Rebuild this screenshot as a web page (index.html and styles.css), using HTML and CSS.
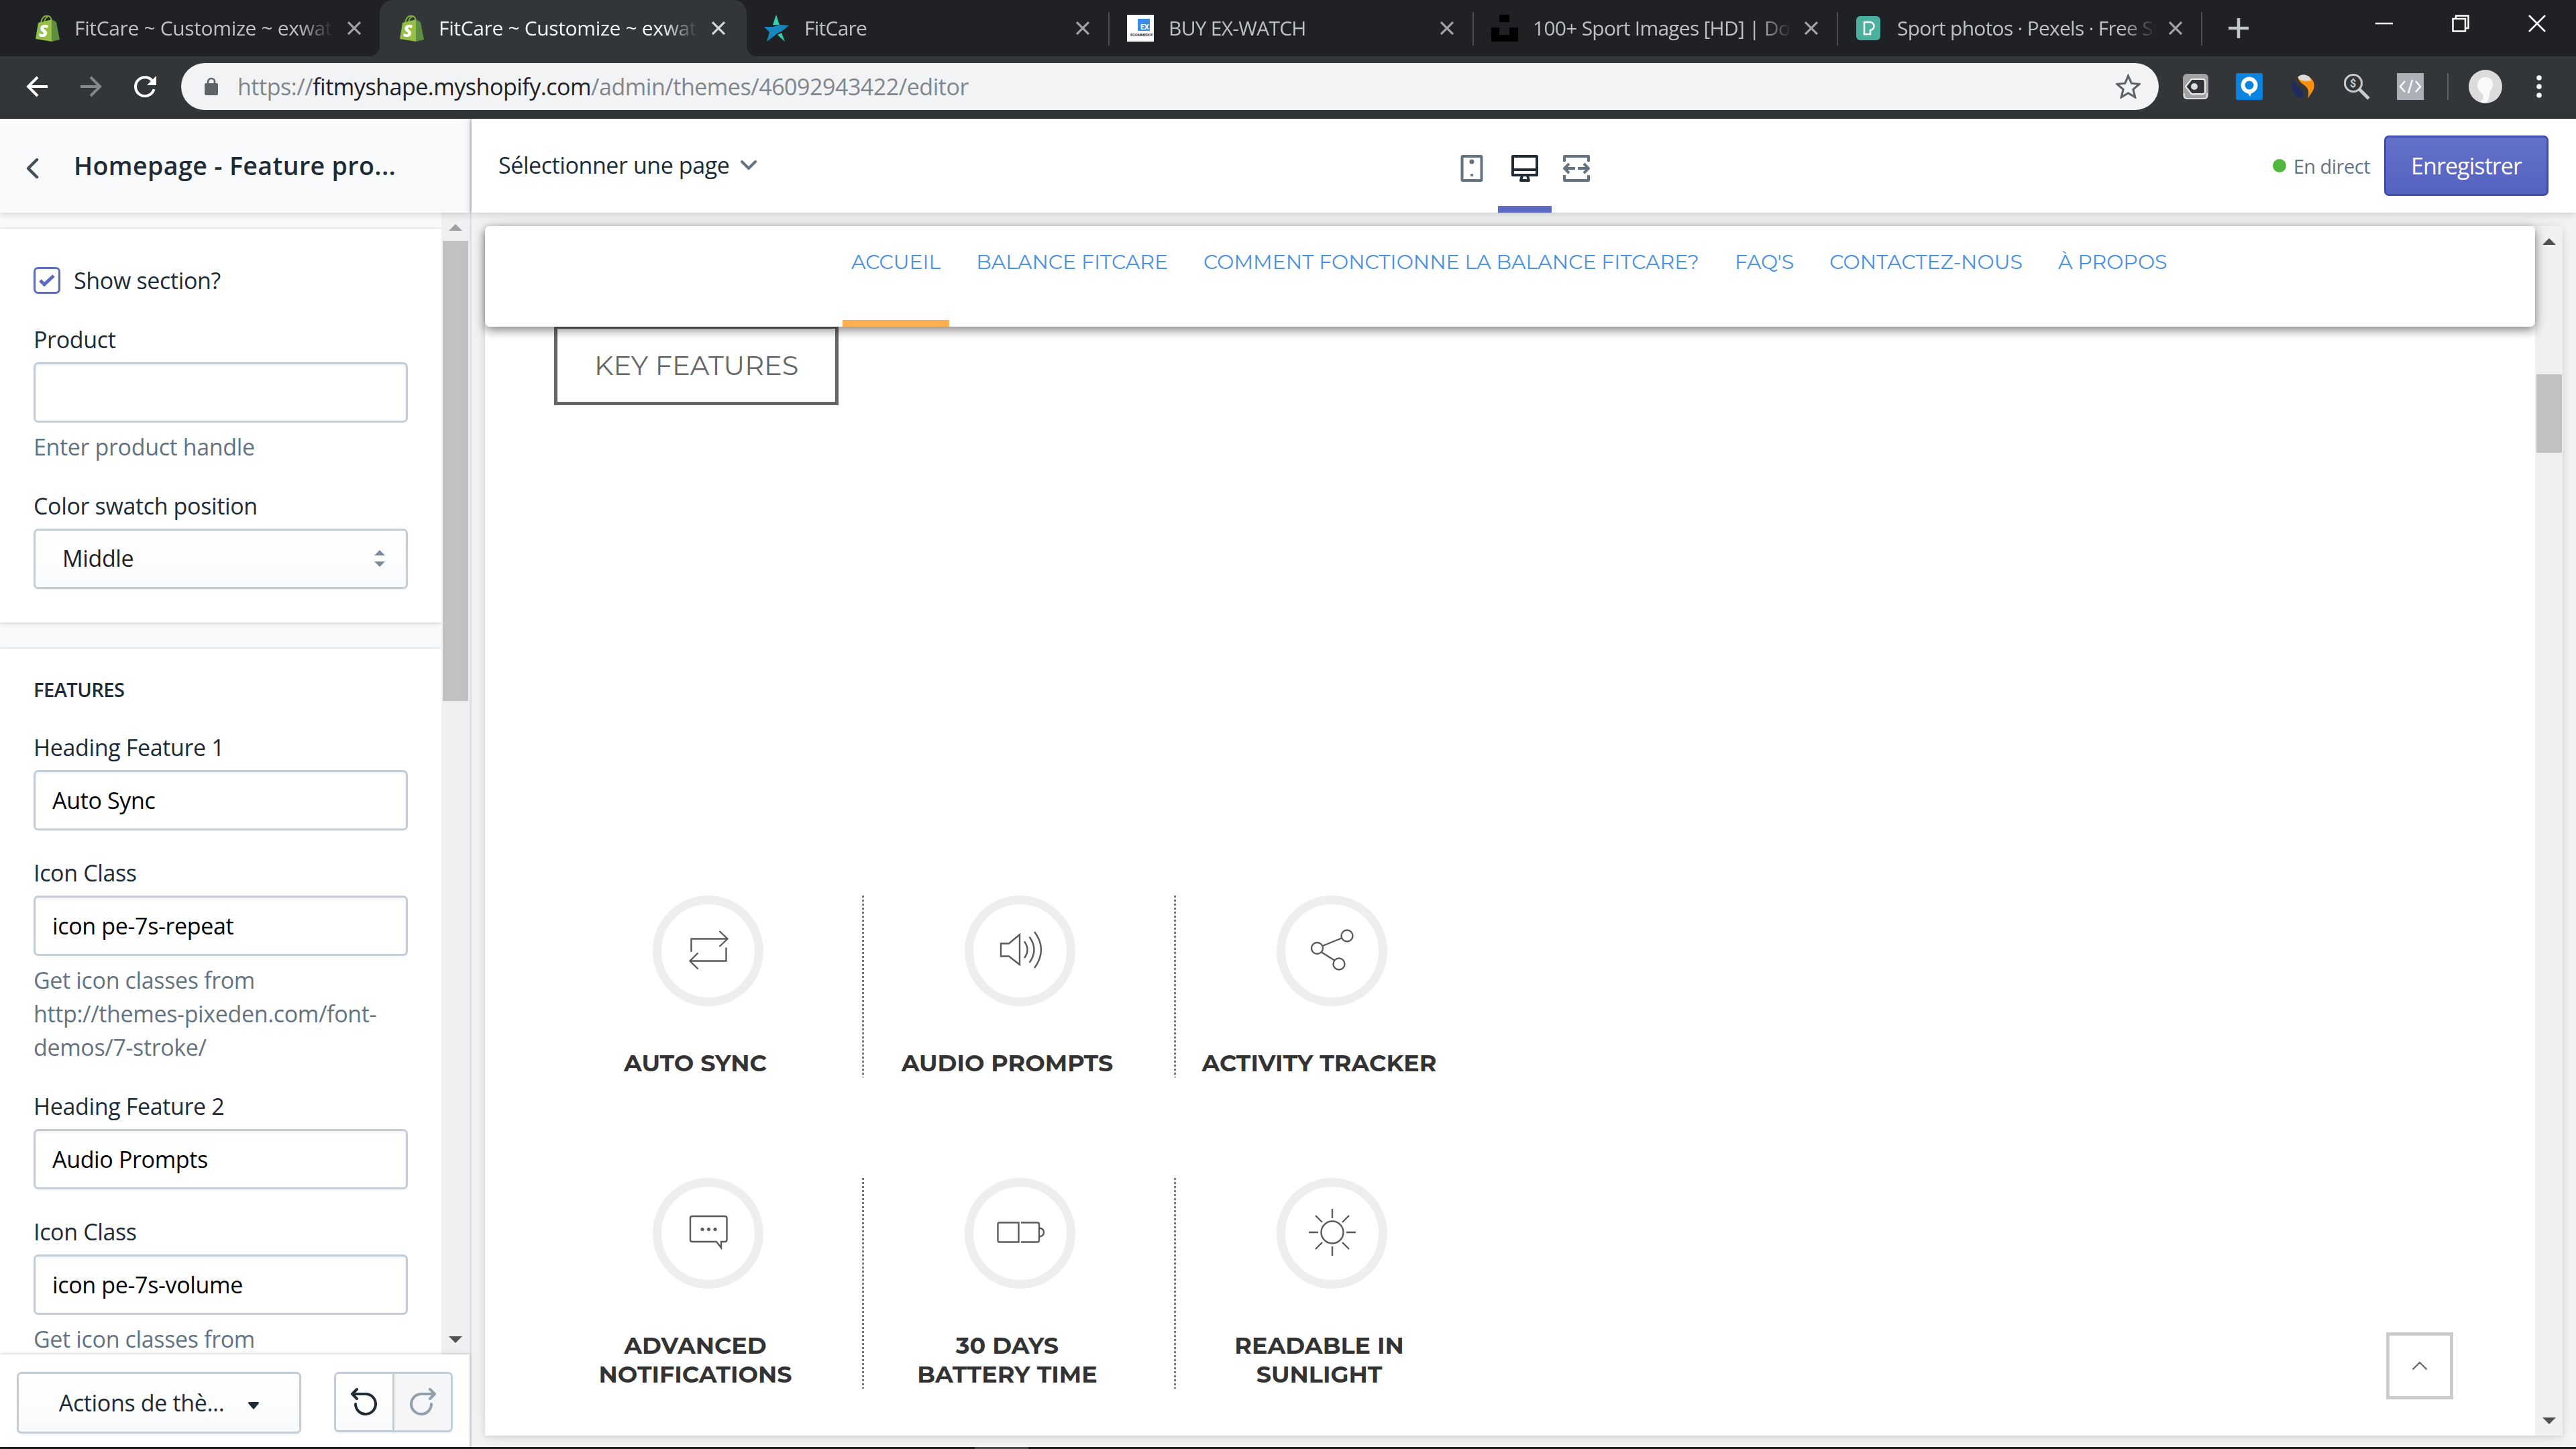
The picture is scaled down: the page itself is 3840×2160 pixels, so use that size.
FILE: index.html
```
<!DOCTYPE html>
<html lang="fr">
<head>
	<meta charset="UTF-8" />
	<meta name="viewport" content="width=device-width, initial-scale=1.0" />
	<title>FitCare ~ Customize ~ exwatch</title>
	<link rel="stylesheet" href="styles.css">
</head>
<body>
	<!-- shared symbols -->
	<svg class="defs" width="0" height="0">
		<symbol id="shopify" viewBox="0 0 38 40">
			<path d="M9 12C10 5 14 1 18 2c4-1 7 3 7 8" fill="none" stroke="#7fb03c" stroke-width="2" />
			<path d="M14 11C15 6 17 3 20 3" fill="none" stroke="#7fb03c" stroke-width="2" />
			<path d="M5 12l20-5 1 33L1 36z" fill="#95bf47" />
			<path d="M25 7l7 4 5 26-12 3z" fill="#5e8e3e" />
			<text x="6" y="33" class="bag-letter">S</text>
		</symbol>
		<symbol id="cross" viewBox="0 0 20 20">
			<path d="M1 1l18 18M19 1L1 19" fill="none" stroke="currentColor" stroke-width="3.2" />
		</symbol>
	</svg>

	<header class="tabs">
		<div class="tab">
			<svg class="favicon"><use href="#shopify" /></svg>
			<span class="tab-title">FitCare ~ Customize ~ exwatc</span>
			<svg class="tab-close"><use href="#cross" /></svg>
		</div>
		<div class="tab active">
			<svg class="favicon"><use href="#shopify" /></svg>
			<span class="tab-title">FitCare ~ Customize ~ exwatc</span>
			<svg class="tab-close"><use href="#cross" /></svg>
		</div>
		<div class="tab line">
			<svg class="favicon" viewBox="0 0 40 40">
				<path d="M15 15L20 0l5 15z" fill="#35d0ae" />
				<path d="M2 18h13l10-3 14 1-11 9-5 2-17 13 4-14z" fill="#1787c0" />
				<path d="M22 30l6-3 5 13z" fill="#35d0ae" />
			</svg>
			<span class="tab-title tight">FitCare</span>
			<svg class="tab-close"><use href="#cross" /></svg>
		</div>
		<div class="tab line">
			<svg class="favicon" viewBox="0 0 40 40">
				<rect width="40" height="40" fill="#fff" />
				<rect x="16" y="6" width="18" height="18" fill="#3b8ae6" />
				<text x="20" y="22" class="ex-letters">EX</text>
				<text x="5" y="32" class="ex-small">ECOMMERCE</text>
			</svg>
			<span class="tab-title tight">BUY EX-WATCH</span>
			<svg class="tab-close"><use href="#cross" /></svg>
		</div>
		<div class="tab line">
			<svg class="favicon" viewBox="0 0 40 40">
				<path d="M12 0h15v11H12zM0 19h12v11h15V19h13v21H0z" fill="#000" />
			</svg>
			<span class="tab-title tight">100+ Sport Images [HD] | Do</span>
			<svg class="tab-close"><use href="#cross" /></svg>
		</div>
		<div class="tab line">
			<svg class="favicon" viewBox="0 0 40 40">
				<rect x="1" y="2" width="36" height="36" rx="6" fill="#4bb09e" />
				<path d="M13 11h8a6 6 0 0 1 1 12v6h-9z" fill="none" stroke="#fff" stroke-width="2.5" />
			</svg>
			<span class="tab-title tight">Sport photos · Pexels · Free St</span>
			<svg class="tab-close"><use href="#cross" /></svg>
		</div>
		<svg class="new-tab" viewBox="0 0 30 30"><path d="M15 0v30M0 15h30" stroke="#c4c7ca" stroke-width="4.5" /></svg>
		<div class="window-buttons">
			<svg width="26" height="26" viewBox="0 0 26 26"><path d="M0 13h26" stroke="#fff" stroke-width="2.5" /></svg>
			<svg width="26" height="26" viewBox="0 0 26 26"><path d="M6 6V1.5h18.5V20H20M1.5 6H20v18.500H1.500z" fill="none" stroke="#fff" stroke-width="2.5" /></svg>
			<svg width="26" height="26" viewBox="0 0 26 26"><path d="M1 1l24 24M25 1L1 25" stroke="#fff" stroke-width="2.5" /></svg>
		</div>
	</header>

	<div class="toolbar">
		<svg class="nav-icon" viewBox="0 0 32 32"><path d="M32 16H3M17 2L3 16l14 14" fill="none" stroke="#fff" stroke-width="4" /></svg>
		<svg class="nav-icon" viewBox="0 0 32 32"><path d="M0 16h29M15 2l14 14-14 14" fill="none" stroke="#85888b" stroke-width="4" /></svg>
		<svg class="nav-icon" viewBox="0 0 32 32">
			<path d="M28 9A14 14 0 1 0 29.500 20" fill="none" stroke="#fff" stroke-width="4" />
			<path d="M33 0v14H19z" fill="#fff" />
		</svg>
		<div class="omnibox">
			<svg class="lock" viewBox="0 0 20 28">
				<path d="M5 11V7a5 5 0 0 1 10 0v4" fill="none" stroke="#5f6368" stroke-width="2.600" />
				<rect y="9" width="20" height="18" rx="2" fill="#5f6368" />
			</svg>
			<span class="url">https://<b>fitmyshape.myshopify.com</b>/admin/themes/46092943422/editor</span>
			<svg class="star" viewBox="0 0 36 36"><path d="M18 3l4.600 10.800L34 15l-8.800 7.600L28 34l-10-6-10 6 2.800-11.400L2 15l11.400-1.200z" fill="none" stroke="#5f6368" stroke-width="3" /></svg>
		</div>
		<div class="extensions">
			<svg viewBox="0 0 40 40">
				<rect x="1" y="1" width="38" height="38" rx="6" fill="#a2a2a2" />
				<path d="M3 30v3q0 5 5 5h24q5 0 5-5v-3" fill="none" stroke="#ddd" stroke-width="2" />
				<path d="M5 20l9-11h16q4 0 4 4v14q0 4-4 4H14z" fill="#303437" stroke="#eee" stroke-width="2" />
				<circle cx="18" cy="20" r="5" fill="#ddd" />
			</svg>
			<svg viewBox="0 0 40 40">
				<rect width="40" height="40" rx="3" fill="#0a84e0" />
				<circle cx="20" cy="18" r="9.500" fill="none" stroke="#fff" stroke-width="6" />
				<path d="M15 25h10l-4 10z" fill="#fff" />
			</svg>
			<svg viewBox="0 0 40 40">
				<path d="M5 6q-6 20 8 30l6 1q4-6-3-14Q6 15 5 6z" fill="#1d2b5e" />
				<path d="M12 6q8-6 18 0 10 8 5 20l-8 12q4-14-5-20-8-5-10-12z" fill="#ff8f0c" />
				<path d="M13 5q8-6 17 1l2 5q-12 2-18-2z" fill="#dcdcdc" />
			</svg>
			<svg viewBox="0 0 40 40">
				<circle cx="15" cy="15" r="12.500" fill="none" stroke="#c9cbcd" stroke-width="3" />
				<path d="M24 24l14 14" stroke="#c9cbcd" stroke-width="5" />
				<text x="10" y="21" class="dollar">$</text>
			</svg>
			<svg viewBox="0 0 40 40">
				<rect width="40" height="40" fill="#adb0b7" />
				<path d="M12 12l-7 8 7 8M28 12l7 8-7 8M23 10l-6 20" fill="none" stroke="#fff" stroke-width="2.500" />
			</svg>
		</div>
		<div class="toolbar-line"></div>
		<svg class="avatar" viewBox="0 0 50 50">
			<circle cx="25" cy="25" r="25" fill="#dcdcdc" />
			<path d="M25 11c8 0 12 6 11 13-1 6-5 7-5 12 0 6-2 11-5 13-3 1-7 0-8-2 4-2 4-7 3-11-5-3-8-8-8-13 0-7 5-12 12-12z" fill="#f8f9f9" />
		</svg>
		<svg class="dots" viewBox="0 0 8 34"><circle cx="4" cy="4" r="3.800" /><circle cx="4" cy="17" r="3.800" /><circle cx="4" cy="30" r="3.800" /></svg>
	</div>

	<div class="editor">
		<aside class="sidebar">
			<div class="sidebar-header">
				<svg width="20" height="30" viewBox="0 0 20 30"><path d="M17 2L4 15l13 13" fill="none" stroke="#454f5b" stroke-width="4.500" stroke-linecap="round" stroke-linejoin="round" /></svg>
				<h1>Homepage - Feature pro...</h1>
			</div>
			<div class="sidebar-body">
				<div class="settings">
					<section class="card">
						<label class="check">
							<span class="checkbox">
								<svg width="26" height="22" viewBox="0 0 26 22"><path d="M3 11l6 6L23 4" fill="none" stroke="#5c6ac4" stroke-width="5" /></svg>
							</span>
							Show section?
						</label>
						<div class="field">
							<label>Product</label>
							<div class="input"></div>
							<p class="help">Enter product handle</p>
						</div>
						<div class="field">
							<label>Color swatch position</label>
							<div class="input select">
								Middle
								<svg width="16" height="25" viewBox="0 0 16 25"><path d="M8 0l8 8H0zM8 25l8-8H0z" fill="#798c9c" /></svg>
							</div>
						</div>
					</section>
					<section class="card">
						<h2>Features</h2>
						<div class="field">
							<label>Heading Feature 1</label>
							<div class="input">Auto Sync</div>
						</div>
						<div class="field">
							<label>Icon Class</label>
							<div class="input">icon pe-7s-repeat</div>
							<p class="help">Get icon classes from<br>http://themes-pixeden.com/font-<br>demos/7-stroke/</p>
						</div>
						<div class="field">
							<label>Heading Feature 2</label>
							<div class="input">Audio Prompts</div>
						</div>
						<div class="field">
							<label>Icon Class</label>
							<div class="input">icon pe-7s-volume</div>
							<p class="help">Get icon classes from</p>
						</div>
					</section>
				</div>
				<div class="scrollbar side-scroll">
					<div class="arrow up"></div>
					<div class="thumb"></div>
					<div class="arrow down"></div>
				</div>
			</div>
			<div class="sidebar-footer">
				<div class="btn actions">
					Actions de thè...
					<svg width="16" height="11" viewBox="0 0 16 11"><path d="M1 0h14q2 1 0 3L9 10q-1 1-2 0L1 3q-2-2 0-3z" fill="#212b36" /></svg>
				</div>
				<div class="history">
					<div class="btn">
						<svg width="42" height="42" viewBox="0 0 42 42"><path d="M10 2L3 9l7 7M3 9h21a15 15 0 1 1-16 15" fill="none" stroke="#212b36" stroke-width="4" stroke-linecap="round" stroke-linejoin="round" /></svg>
					</div>
					<div class="btn disabled">
						<svg width="42" height="42" viewBox="0 0 42 42"><path d="M32 2l7 7-7 7M39 9H18a15 15 0 1 0 16 15" fill="none" stroke="#919eab" stroke-width="4" stroke-linecap="round" stroke-linejoin="round" /></svg>
					</div>
				</div>
			</div>
		</aside>

		<main class="main">
			<div class="topbar">
				<div class="page-select">
					Sélectionner une page
					<svg width="26" height="17" viewBox="0 0 26 17"><path d="M3 3l10 10L23 3" fill="none" stroke="#637381" stroke-width="4" stroke-linecap="round" stroke-linejoin="round" /></svg>
				</div>
				<div class="devices">
					<div class="device">
						<svg viewBox="0 0 40 40">
							<rect x="5.500" y="2" width="29" height="36" rx="1" fill="none" stroke="#637381" stroke-width="4" />
							<circle cx="20" cy="10" r="3.500" fill="#637381" /><circle cx="20" cy="30" r="2.200" fill="#637381" />
						</svg>
					</div>
					<div class="device current">
						<svg viewBox="0 0 40 40">
							<path d="M2 2h36v28H2zM2 22h36M16 31l-2 7h12l-2-7" fill="none" stroke="#212b36" stroke-width="4" stroke-linejoin="round" />
						</svg>
					</div>
					<div class="device">
						<svg viewBox="0 0 40 40">
							<path d="M2 10V2h36v8M2 30v8h36v-8" fill="none" stroke="#637381" stroke-width="4" stroke-linejoin="round" />
							<path d="M18 20H3M9 13l-7 7 7 7M22 20h15M31 13l7 7-7 7" fill="none" stroke="#637381" stroke-width="4" />
						</svg>
					</div>
				</div>
				<div class="status"><i></i>En direct</div>
				<div class="save">Enregistrer</div>
			</div>

			<div class="preview">
				<div class="frame">
					<div class="page">
						<nav class="site-nav">
							<a class="on">Accueil</a>
							<a>Balance FitCare</a>
							<a>Comment fonctionne la balance FitCare?</a>
							<a>FAQ's</a>
							<a>Contactez-nous</a>
							<a>À propos</a>
						</nav>
						<div class="key-features">KEY FEATURES</div>
						<div class="features">
							<div class="feature">
								<div class="ring"><svg viewBox="0 0 80 80"><path d="M14.500 41V21.500h54M56.500 10l12 11.500-12 11.500M66.500 34.500v20H12.500M24.500 42.500l-12 12 12 12" /></svg></div>
								<h3>Auto Sync</h3>
							</div>
							<div class="feature">
								<div class="ring"><svg viewBox="0 0 80 80"><path d="M11 28.500h12L39 15v45L23 47.500H11zM46 25.500q9 12.500 0 24.500M53.500 18.500q14 19.500 0 38.500M61 11q20 26.500 0 54" /></svg></div>
								<h3>Audio Prompts</h3>
							</div>
							<div class="feature">
								<div class="ring"><svg viewBox="0 0 80 80"><circle cx="17.500" cy="35.500" r="8.500" /><circle cx="62" cy="17" r="8.500" /><circle cx="50" cy="59" r="8.500" /><path d="M25.500 32L54 20.500M24 41.500l20 12.500" /></svg></div>
								<h3>Activity Tracker</h3>
							</div>
							<div class="feature">
								<div class="ring"><svg viewBox="0 0 80 80"><path d="M52 52H16q-3 0-3-3V17q0-3 3-3h48.500q3 0 3 3v32q0 3-3 3H59v9z" /><g class="solid"><circle cx="31" cy="33.500" r="2.600" /><circle cx="40.500" cy="33.500" r="2.600" /><circle cx="50" cy="33.500" r="2.600" /></g></svg></div>
								<h3>Advanced<br>Notifications</h3>
							</div>
							<div class="feature">
								<div class="ring"><svg viewBox="0 0 80 80"><path d="M37.500 23.500H9q-2.500 0-2.500 2.500v24q0 2.500 2.500 2.500h28.500zM41 23.500h24.500q2.500 0 2.500 2.500v24q0 2.500-2.500 2.500H41M68.500 31.500q6.500 1 6.500 6.500t-6.500 6.500" /></svg></div>
								<h3>30 Days<br>Battery Time</h3>
							</div>
							<div class="feature">
								<div class="ring"><svg viewBox="0 0 80 80"><circle cx="40" cy="38" r="16.500" /><path d="M40 3v14M40 59v14M5 38h14M61 38h14M15 13l10 10M65 13L55 23M15 63l10-10M65 63L55 53" /></svg></div>
								<h3>Readable in<br>Sunlight</h3>
							</div>
						</div>
						<div class="to-top"><svg width="24" height="14" viewBox="0 0 24 14"><path d="M1.500 12.500L12 2l10.500 10.500" fill="none" stroke="#666" stroke-width="2.200" /></svg></div>
					</div>
					<div class="scrollbar page-scroll">
						<div class="arrow up"></div>
						<div class="thumb"></div>
						<div class="arrow down"></div>
					</div>
				</div>
			</div>
		</main>
	</div>
	<div class="taskbar"><i></i></div>
</body>
</html>
```
FILE: styles.css
```
* {
	box-sizing: border-box;
}
body {
	margin: 0;
	height: 2160px;
	display: flex;
	flex-direction: column;
	overflow: hidden;
	font-family: 'Open Sans', sans-serif;
	font-size: 34px;
	letter-spacing: -0.35px;
	color: #212b36;
	background: #fff;
}
svg {
	flex: none;
	display: block;
}
.defs {
	display: none;
}

/* browser tabs */
.tabs {
	height: 84px;
	flex: none;
	display: flex;
	align-items: center;
	background: #202124;
	padding-left: 25px;
	font-size: 30px;
	letter-spacing: -0.35px;
	color: #bdc1c6;
}
.tab {
	width: 543px;
	height: 84px;
	flex: none;
	display: flex;
	align-items: center;
	position: relative;
	padding-left: 26px;
}
.tab.active {
	color: #f1f3f4;
}
.tab.active::before {
	content: '';
	position: absolute;
	z-index: 0;
	left: -2px;
	top: 0;
	width: 547px;
	height: 84px;
	border-radius: 20px 20px 0 0;
	background: #323639;
}
.tab.active::after {
	content: '';
	position: absolute;
	left: -18px;
	bottom: 0;
	width: 579px;
	height: 16px;
	background: radial-gradient(circle at 0 0, transparent 16px, #323639 16.5px) left / 16px 16px no-repeat,
		radial-gradient(circle at 100% 0, transparent 16px, #323639 16.5px) right / 16px 16px no-repeat;
}
.tab.active > * {
	position: relative;
	z-index: 1;
}
.tab.line::after {
	content: '';
	position: absolute;
	right: 0;
	top: 18px;
	width: 2px;
	height: 50px;
	background: #4a4c50;
}
.favicon {
	width: 40px;
	height: 40px;
}
.bag-letter {
	font: italic 900 25px 'Open Sans', sans-serif;
	fill: #fff;
}
.ex-letters {
	font: bold 11px Roboto, sans-serif;
	fill: #fff;
}
.ex-small {
	font: bold 6px Roboto, sans-serif;
	fill: #444;
}
.tab-title {
	width: 386px;
	margin-left: 20px;
	margin-right: 21px;
	line-height: 40px;
	white-space: nowrap;
	overflow: hidden;
	-webkit-mask-image: linear-gradient(90deg, #000 335px, transparent 386px);
	mask-image: linear-gradient(90deg, #000 335px, transparent 386px);
}
.tab-title.tight {
	margin-left: 22px;
	margin-right: 19px;
	letter-spacing: -0.75px;
}
.tab-close {
	width: 20px;
	height: 20px;
	color: #a0a3a8;
}
.tab.active .tab-close {
	color: #d5d7d9;
}
.new-tab {
	width: 30px;
	height: 30px;
	margin-left: 39px;
}
.window-buttons {
	display: flex;
	gap: 88px;
	margin-left: auto;
	margin-right: 45px;
	margin-bottom: 14px;
}

/* address bar */
.toolbar {
	height: 93px;
	flex: none;
	display: flex;
	align-items: center;
	background: #323639;
	border-bottom: 1px solid #26292b;
	padding: 0 51px 3px 39px;
}
.nav-icon {
	width: 32px;
	height: 32px;
	margin-right: 49px;
	overflow: visible;
}
.nav-icon + .nav-icon {
	margin-right: 48px;
}
.omnibox {
	width: 2948px;
	height: 70px;
	margin-left: -10px;
	display: flex;
	align-items: center;
	background: #f1f3f4;
	border-radius: 35px;
	padding: 0 27px 0 35px;
}
.lock {
	width: 20px;
	height: 28px;
}
.url {
	margin-left: 29px;
	letter-spacing: -0.48px;
	color: #80868b;
	line-height: 48px;
}
.url b {
	font-weight: 400;
	color: #202124;
}
.star {
	width: 37px;
	height: 37px;
	margin-left: auto;
}
.extensions {
	display: flex;
	gap: 40px;
	margin-left: 35px;
}
.extensions svg {
	width: 40px;
	height: 40px;
}
.dollar {
	font: bold 16px Roboto, sans-serif;
	fill: #c9cbcd;
}
.toolbar-line {
	width: 2px;
	height: 40px;
	margin: 0 30px 0 35px;
	background: #5c6064;
}
.avatar {
	width: 50px;
	height: 50px;
}
.dots {
	width: 8px;
	height: 34px;
	margin-left: auto;
	fill: #fff;
}

/* theme editor */
.editor {
	flex: 1;
	min-height: 0;
	display: flex;
}
.sidebar {
	width: 703px;
	flex: none;
	display: flex;
	flex-direction: column;
	background: #f9fafb;
	border-right: 3px solid #dfe3e8;
}
.sidebar-header {
	height: 140px;
	flex: none;
	display: flex;
	align-items: center;
	position: relative;
	z-index: 1;
	padding: 8px 0 0 38px;
	background: #f9fafb;
	box-shadow: 0 1px 12px rgba(0, 0, 0, 0.2);
}
.sidebar-header h1 {
	margin: 0 0 9px 52px;
	font-size: 37.5px;
	font-weight: 600;
	letter-spacing: 0.4px;
	white-space: nowrap;
}
.sidebar-body {
	flex: 1;
	min-height: 0;
	display: flex;
}
.settings {
	width: 658px;
	overflow: hidden;
	padding-top: 24px;
}
.card {
	background: #fff;
	box-shadow: 0 0 0 2px rgba(63, 63, 68, 0.06), 0 2px 7px rgba(63, 63, 68, 0.15);
	padding: 51.5px 50px 50px;
	margin-bottom: 39px;
}
.card + .card {
	padding-top: 41px;
}
.card h2 {
	margin: 0 0 40px;
	font-size: 29px;
	font-weight: 600;
	line-height: 40px;
	letter-spacing: -0.5px;
	text-transform: uppercase;
}
.check {
	display: flex;
	align-items: center;
	line-height: 50px;
}
.checkbox {
	width: 40px;
	height: 40px;
	margin-right: 20px;
	display: flex;
	align-items: center;
	justify-content: center;
	border: 3px solid #5c6ac4;
	border-radius: 7px;
	box-shadow: 0 2px 3px rgba(0, 0, 0, 0.06);
}
.field {
	margin-top: 37.5px;
	line-height: 50px;
}
.card h2 + .field {
	margin-top: 0;
}
.field label {
	display: block;
	padding-top: 1px;
	margin-bottom: 9px;
}
.input {
	height: 90px;
	padding: 0 25px;
	border: 3px solid #c4cdd5;
	border-radius: 7px;
	background: #fff;
	box-shadow: inset 0 2px 3px rgba(99, 115, 129, 0.1);
	line-height: 85px;
	color: #000;
}
.select {
	display: flex;
	align-items: center;
	justify-content: space-between;
	padding: 0 31px 0 40px;
	background: linear-gradient(#fff, #f9fafb);
	box-shadow: 0 2px 2px rgba(22, 29, 37, 0.05);
	color: #212121;
}
.help {
	margin: 11px 0 -1px;
	color: #637381;
}

/* scrollbars */
.scrollbar {
	display: flex;
	flex-direction: column;
	align-items: center;
	background: #f0f0f0;
}
.arrow {
	border: 10px solid transparent;
}
.arrow.up {
	border-top: 0;
	border-bottom-color: #a0a0a0;
}
.arrow.down {
	border-bottom: 0;
	border-top-color: #505050;
	margin-top: auto;
}
.thumb {
	width: 38px;
	background: #c1c1c1;
}
.side-scroll {
	width: 42px;
	padding: 17px 0 17px;
}
.side-scroll .thumb {
	height: 686px;
	margin-top: 15px;
}
.page-scroll {
	width: 41px;
	padding: 18px 0 17px;
}
.page-scroll .arrow.up {
	border-bottom-color: #505050;
}
.page-scroll .thumb {
	height: 117px;
	margin-top: 193px;
}

.sidebar-footer {
	height: 138px;
	flex: none;
	display: flex;
	justify-content: space-between;
	position: relative;
	padding: 26px 25px 0;
	background: #fff;
	box-shadow: 0 0 5px rgba(0, 0, 0, 0.25);
}
.btn {
	display: flex;
	align-items: center;
	justify-content: center;
	border: 3px solid #c4cdd5;
	border-radius: 7px;
	background: linear-gradient(#fff, #f9fafb);
	box-shadow: 0 2px 2px rgba(22, 29, 37, 0.05);
}
.actions {
	width: 424px;
	height: 92px;
	gap: 36px;
}
.actions svg {
	margin-top: 8px;
}
.history {
	display: flex;
}
.history .btn {
	width: 90px;
	height: 90px;
	border-radius: 7px 0 0 7px;
}
.history .disabled {
	margin-left: -3px;
	border-radius: 0 7px 7px 0;
	background: #f4f6f8;
}

/* right side */
.main {
	flex: 1;
	display: flex;
	flex-direction: column;
	background: #f2f4f6;
}
.topbar {
	height: 140px;
	flex: none;
	display: flex;
	align-items: center;
	position: relative;
	z-index: 1;
	padding-right: 41px;
	background: #fff;
	box-shadow: 0 1px 12px rgba(0, 0, 0, 0.2);
}
.page-select {
	width: 390px;
	display: flex;
	align-items: center;
	gap: 16px;
	margin-left: 40px;
	margin-bottom: 2px;
	letter-spacing: -0.42px;
}
.devices {
	display: flex;
	margin-left: 1021px;
}
.device {
	width: 80px;
	height: 140px;
	display: flex;
	justify-content: center;
	padding-top: 54px;
}
.device.current {
	border-bottom: 10px solid #5c6ac4;
}
.device:first-child {
	margin-right: -1px;
}
.device:last-child {
	margin-left: -3px;
}
.device svg {
	width: 40px;
	height: 40px;
}
.status {
	display: flex;
	align-items: center;
	margin-left: auto;
	margin-right: 21px;
	font-size: 29px;
	letter-spacing: -0.5px;
	color: #637381;
}
.status i {
	width: 20px;
	height: 20px;
	margin-right: 11px;
	border-radius: 50%;
	background: #50b83c;
}
.save {
	width: 245px;
	height: 90px;
	border: 3px solid #3f4eae;
	border-radius: 7px;
	background: linear-gradient(#6371c7, #5563c1);
	box-shadow: inset 0 2px 0 #6774c8;
	color: #fff;
	line-height: 85px;
	text-align: center;
	letter-spacing: -0.9px;
}
.preview {
	flex: 1;
	display: flex;
	padding: 20px 20px 17px;
}
.frame {
	flex: 1;
	display: flex;
	background: #fff;
	border-radius: 7px 7px 0 0;
	box-shadow: 0 2px 10px rgba(0, 0, 0, 0.13), 0 0 40px rgba(0, 0, 0, 0.06);
}
.page {
	flex: 1;
	position: relative;
	font-family: Montserrat, Inter, sans-serif;
	letter-spacing: 0;
}
.site-nav {
	height: 150px;
	display: flex;
	position: relative;
	z-index: 1;
	padding-left: 533px;
	background: #fff;
	border-radius: 7px;
	box-shadow: 0 5px 15px rgba(0, 0, 0, 0.5);
	font-size: 30px;
	line-height: 37px;
	color: #4a90e2;
	text-transform: uppercase;
}
.site-nav a {
	padding: 35px 13px 0;
	margin-right: 27px;
	white-space: nowrap;
}
.site-nav .on {
	border-bottom: 10px solid #ffaf4d;
}
.key-features {
	width: 424px;
	height: 119px;
	margin: -2px 0 0 103px;
	padding: 30px 0 0 55px;
	border: 5px solid #666;
	font-size: 40px;
	line-height: 49px;
	color: #666;
}
.features {
	width: 1395px;
	display: grid;
	grid-template-columns: repeat(3, 465px);
	row-gap: 150px;
	margin: 731px 0 0 100px;
}
.feature {
	background: repeating-linear-gradient(#777 0 3px, transparent 3px 6px) right / 3px 100% no-repeat;
}
.feature:nth-child(3n) {
	background: none;
}
.ring {
	width: 165px;
	height: 165px;
	margin: 0 auto;
	display: flex;
	align-items: center;
	justify-content: center;
	border: 13px solid #eee;
	border-radius: 50%;
}
.ring svg {
	width: 80px;
	height: 80px;
	fill: none;
	stroke: #5a5a5a;
	stroke-width: 2.4;
}
.ring .solid {
	fill: #5a5a5a;
	stroke: none;
}
.feature h3 {
	margin: 63px 38px 0 0;
	font-size: 35px;
	font-weight: 700;
	line-height: 43px;
	text-align: center;
	text-transform: uppercase;
	color: #333;
}
.to-top {
	width: 100px;
	height: 100px;
	position: absolute;
	right: 122px;
	bottom: 54px;
	display: flex;
	align-items: center;
	justify-content: center;
	border: 5px solid #ccc;
}
.taskbar {
	height: 3px;
	flex: none;
	background: #1c1e22;
}
.taskbar i {
	display: block;
	width: 80px;
	height: 3px;
	margin-left: 1453px;
	background: #4a4c4f;
}
```
